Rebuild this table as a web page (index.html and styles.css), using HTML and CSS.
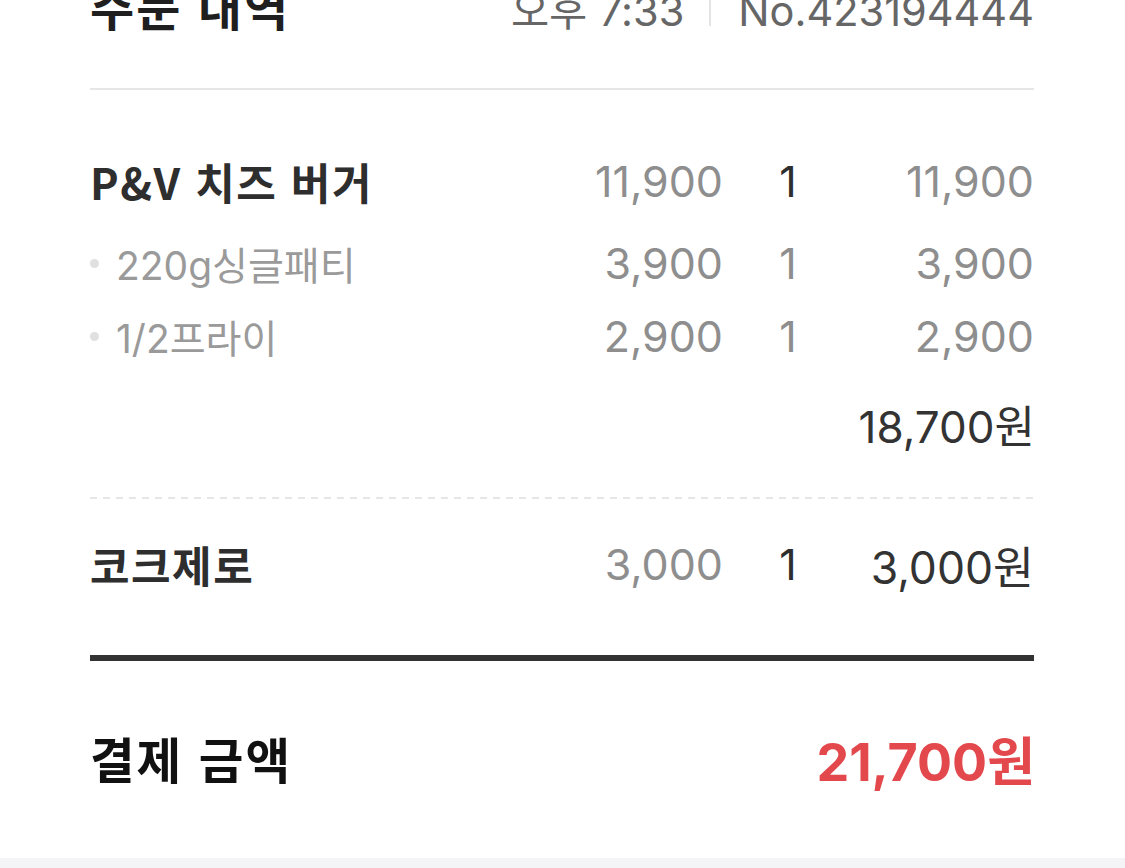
FILE: index.html
```html
<!DOCTYPE html>
<html lang="ko">
<head>
<meta charset="utf-8">
<link rel="stylesheet" href="styles.css">
</head>
<body>
<div class="sheet">
  <header class="head">
    <h1 class="head-title">주문 내역</h1>
    <div class="head-meta">
      <span>오후 7:33</span>
      <span class="bar"></span>
      <span>No.423194444</span>
    </div>
  </header>

  <section class="group">
    <div class="row row-main">
      <div class="name">P&amp;V 치즈 버거</div>
      <div class="price">11,900</div>
      <div class="qty">1</div>
      <div class="total">11,900</div>
    </div>
    <div class="row row-opt row-opt1">
      <div class="name opt"><span class="dot"></span>220g싱글패티</div>
      <div class="price">3,900</div>
      <div class="qty light">1</div>
      <div class="total light">3,900</div>
    </div>
    <div class="row row-opt row-opt2">
      <div class="name opt"><span class="dot"></span>1/2프라이</div>
      <div class="price">2,900</div>
      <div class="qty light">1</div>
      <div class="total light">2,900</div>
    </div>
    <div class="subtotal">18,700원</div>
  </section>

  <section class="group2">
    <div class="row row-drink">
      <div class="name">코크제로</div>
      <div class="price">3,000</div>
      <div class="qty">1</div>
      <div class="total dark">3,000원</div>
    </div>
  </section>

  <section class="pay">
    <div class="pay-label">결제 금액</div>
    <div class="pay-amount">21,700원</div>
  </section>
</div>
<div class="band"></div>
</body>
</html>
```

FILE: styles.css
```css
* { box-sizing: border-box; margin: 0; padding: 0; }
html, body { background: #ffffff; }
body {
  font-family: Inter, "Noto Sans CJK KR", sans-serif;
  color: #333333;
  overflow: hidden;
  height: 868px;
}
.sheet {
  padding: 0 90px 0 90px;
  height: 877px;
}
.head {
  display: flex;
  justify-content: space-between;
  align-items: baseline;
  margin-top: -19px;
  height: 109px;
  margin-right: 1px;
  border-bottom: 2px solid #e6e6e6;
}
.head-title {
  font-family: "Noto Sans CJK KR", sans-serif;
  font-size: 48px;
  font-weight: 700;
  line-height: 48px;
  color: #1f1f1f;
  letter-spacing: 2px;
}
.head-meta {
  display: flex;
  align-items: baseline;
  font-size: 41.5px;
  line-height: 48px;
  color: #666666;
}
.head-meta .bar {
  display: inline-block;
  width: 2px;
  height: 26px;
  background: #e3e3e3;
  margin: 0 27px 0 25px;
}
.group {
  padding-top: 50px;
  padding-bottom: 42px;
  margin-right: 1px;
  background-image: linear-gradient(to right, #e6e6e6 55%, transparent 55%);
  background-size: 13px 2px;
  background-repeat: repeat-x;
  background-position: left bottom;
}
.row {
  display: grid;
  grid-template-columns: 1fr 162px 130px 181px;
  align-items: center;
}
.row-main { height: 82px; }
.row-opt1 { height: 82px; }
.row-opt2 { height: 64px; }
.name {
  font-family: "Noto Sans CJK KR", sans-serif;
  font-size: 43px;
  font-weight: 700;
  color: #2e2e2e;
  letter-spacing: 1.5px;
}
.name.opt {
  display: flex;
  align-items: center;
  font-family: Inter, "Noto Sans CJK KR", sans-serif;
  font-weight: 400;
  font-size: 39px;
  color: #9a9a9a;
  letter-spacing: 0;
}
.dot {
  display: inline-block;
  width: 9px;
  height: 9px;
  border-radius: 50%;
  background: #e0e0e0;
  margin: 0 17px 0 0;
}
.price {
  text-align: right;
  font-size: 43px;
  color: #8e8e8e;
}
.qty {
  text-align: center;
  font-size: 43px;
  color: #2e2e2e;
}
.total {
  text-align: right;
  font-size: 43px;
  color: #8e8e8e;
}
.light { color: #8e8e8e; }
.total.dark { color: #333333; font-size: 44.5px; }
.subtotal {
  margin-top: 29px;
  margin-right: -1px;
  height: 60px;
  line-height: 60px;
  text-align: right;
  font-size: 44px;
  color: #333333;
}
.group2 {
  padding-top: 31px;
  padding-bottom: 57px;
  margin-right: 1px;
  border-bottom: 6px solid #333333;
}
.row-drink { height: 68px; }
.pay {
  display: flex;
  justify-content: space-between;
  align-items: center;
  margin-top: 57px;
  height: 80px;
}
.pay-label {
  font-family: "Noto Sans CJK KR", sans-serif;
  font-size: 48.5px;
  font-weight: 700;
  color: #111111;
  letter-spacing: 2px;
}
.pay-amount {
  font-size: 52px;
  font-weight: 700;
  color: #e3484d;
}
.band {
  height: 10px;
  background: #f4f4f6;
}
```
